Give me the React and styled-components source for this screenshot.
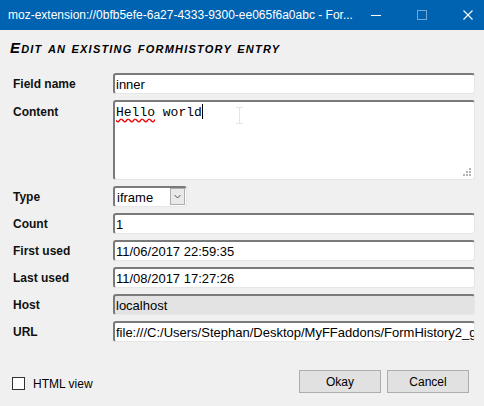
import React from "react"
import styled, { createGlobalStyle } from "styled-components"

const Global = createGlobalStyle`
  html, body {
    margin: 0;
    padding: 0;
    background: #f0f0f0;
    overflow: hidden;
  }
  body {
    font-family: "Liberation Sans", Arial, sans-serif;
  }
`

const Window = styled.div`
  width: 484px;
  height: 406px;
  background: #f0f0f0;
  display: flex;
  flex-direction: column;
`

const TitleBar = styled.div`
  height: 30px;
  background: #0063b1;
  display: flex;
  align-items: center;
  color: #fff;
`

const Title = styled.div`
  flex: none;
  padding-left: 8px;
  font-size: 12px;
  white-space: nowrap;
`

const Controls = styled.div`
  display: flex;
  height: 100%;
  margin-left: auto;
`

const CtrlButton = styled.div`
  width: 46px;
  height: 30px;
  display: flex;
  align-items: center;
  justify-content: center;
  opacity: ${(p) => (p.$dim ? 0.45 : 1)};
`

const Main = styled.div`
  display: flex;
  flex-direction: column;
`

const Heading = styled.h1`
  margin: 10px 0 17px 10px;
  font-size: 15px;
  line-height: 16px;
  letter-spacing: 1.2px;
  font-weight: 900;
  font-style: italic;
  font-variant: small-caps;
  color: #000;
`

const Form = styled.div`
  display: grid;
  grid-template-columns: 100px 1fr;
  row-gap: 6px;
  padding: 0 9px 0 13px;
`

const Label = styled.label`
  font-size: 12px;
  font-weight: bold;
  color: #111;
  align-self: ${(p) => (p.$top ? "start" : "center")};
  padding-top: ${(p) => (p.$top ? "5px" : "0")};
`

const Field = styled.div`
  box-sizing: border-box;
  height: 21px;
  border-style: solid;
  border-width: 2px 1px 1px 2px;
  border-color: #7a7a7a #e6e6e6 #e6e6e6 #7a7a7a;
  border-radius: 3px;
  background: ${(p) => (p.$disabled ? "#e3e3e3" : "#fff")};
  font-size: 13px;
  color: #000;
  padding: 0 1px;
  display: flex;
  align-items: center;
  white-space: nowrap;
  overflow: hidden;
`

const TextArea = styled.div`
  position: relative;
  box-sizing: border-box;
  height: 80px;
  border-style: solid;
  border-width: 2px 1px 1px 2px;
  border-color: #7a7a7a #e6e6e6 #e6e6e6 #7a7a7a;
  border-radius: 3px;
  background: #fff;
  font-family: "Liberation Mono", "Courier New", monospace;
  font-size: 13px;
  line-height: 16px;
  padding: 2px 1px;
  color: #000;
`

const Misspelled = styled.span`
  text-decoration: underline wavy #e00;
  text-decoration-skip-ink: none;
  text-underline-offset: 2px;
`

const Caret = styled.span`
  display: inline-block;
  width: 1px;
  height: 15px;
  background: #000;
  vertical-align: -3px;
`

const Overlay = styled.svg`
  position: absolute;
`

const SelectBox = styled.div`
  box-sizing: border-box;
  width: 74px;
  height: 21px;
  border-style: solid;
  border-width: 2px 1px 1px 2px;
  border-color: #7a7a7a #e6e6e6 #e6e6e6 #7a7a7a;
  border-radius: 3px;
  background: #fff;
  display: flex;
  align-items: stretch;
  font-size: 13px;
`

const SelectValue = styled.div`
  flex: 1;
  display: flex;
  align-items: center;
  padding-left: 2px;
`

const SelectArrow = styled.div`
  width: 15px;
  box-sizing: border-box;
  margin: 0 1px 1px 0;
  border: 1px solid #adadad;
  background: #e9e9e9;
  display: flex;
  align-items: center;
  justify-content: center;
`

const Footer = styled.div`
  margin-top: 28px;
  padding: 0 15px 0 12px;
  display: flex;
  align-items: center;
  justify-content: space-between;
`

const Check = styled.label`
  display: flex;
  align-items: center;
  gap: 8px;
  font-size: 12px;
  color: #000;
  margin-top: 4px;
`

const Box = styled.span`
  box-sizing: border-box;
  width: 13px;
  height: 13px;
  border: 1px solid #333;
  background: #fff;
`

const Buttons = styled.div`
  display: flex;
  gap: 6px;
`

const Button = styled.button`
  box-sizing: border-box;
  width: 82px;
  height: 23px;
  border: 1px solid #adadad;
  background: #e1e1e1;
  font-family: "Liberation Sans", Arial, sans-serif;
  font-size: 12px;
  color: #000;
  padding: 0;
`

const App = () => {
  return (
    <Window>
      <Global />
      <TitleBar>
        <Title>moz-extension://0bfb5efe-6a27-4333-9300-ee065f6a0abc - For...</Title>
        <Controls>
          <CtrlButton>
            <svg width="10" height="10" viewBox="0 0 10 10">
              <line x1="0" y1="5.5" x2="10" y2="5.5" stroke="#fff" strokeWidth="1" />
            </svg>
          </CtrlButton>
          <CtrlButton $dim>
            <svg width="10" height="10" viewBox="0 0 10 10">
              <rect x="0.5" y="0.5" width="9" height="9" fill="none" stroke="#fff" strokeWidth="1" />
            </svg>
          </CtrlButton>
          <CtrlButton>
            <svg width="10" height="10" viewBox="0 0 10 10">
              <path d="M0.5 0.5 L9.5 9.5 M9.5 0.5 L0.5 9.5" stroke="#fff" strokeWidth="1.1" />
            </svg>
          </CtrlButton>
        </Controls>
      </TitleBar>

      <Main>
        <Heading>Edit an existing formhistory entry</Heading>
        <Form>
          <Label>Field name</Label>
          <Field>inner</Field>

          <Label $top>Content</Label>
          <TextArea>
            <Misspelled>Hello</Misspelled> world<Caret />
            <Overlay width="9" height="17" style={{ left: 120, top: 5 }}>
              <path d="M1 0.5 H8 M4.5 0.5 V16.5 M1 16.5 H8" stroke="#e4e4e4" strokeWidth="1" fill="none" />
            </Overlay>
            <Overlay width="9" height="9" style={{ right: 2, bottom: 2 }}>
              <g fill="#b4b4b4">
                <rect x="6" y="0" width="2" height="2" />
                <rect x="3" y="3" width="2" height="2" />
                <rect x="6" y="3" width="2" height="2" />
                <rect x="0" y="6" width="2" height="2" />
                <rect x="3" y="6" width="2" height="2" />
                <rect x="6" y="6" width="2" height="2" />
              </g>
            </Overlay>
          </TextArea>

          <Label>Type</Label>
          <SelectBox>
            <SelectValue>iframe</SelectValue>
            <SelectArrow>
              <svg width="7" height="5" viewBox="0 0 7 5">
                <path d="M0.5 1 L3.5 4 L6.5 1" stroke="#555" strokeWidth="1" fill="none" />
              </svg>
            </SelectArrow>
          </SelectBox>

          <Label>Count</Label>
          <Field>1</Field>

          <Label>First used</Label>
          <Field>11/06/2017 22:59:35</Field>

          <Label>Last used</Label>
          <Field>11/08/2017 17:27:26</Field>

          <Label>Host</Label>
          <Field $disabled>localhost</Field>

          <Label>URL</Label>
          <Field>file:///C:/Users/Stephan/Desktop/MyFFaddons/FormHistory2_gui/index.html</Field>
        </Form>

        <Footer>
          <Check>
            <Box />
            HTML view
          </Check>
          <Buttons>
            <Button>Okay</Button>
            <Button>Cancel</Button>
          </Buttons>
        </Footer>
      </Main>
    </Window>
  )
}

export default App
